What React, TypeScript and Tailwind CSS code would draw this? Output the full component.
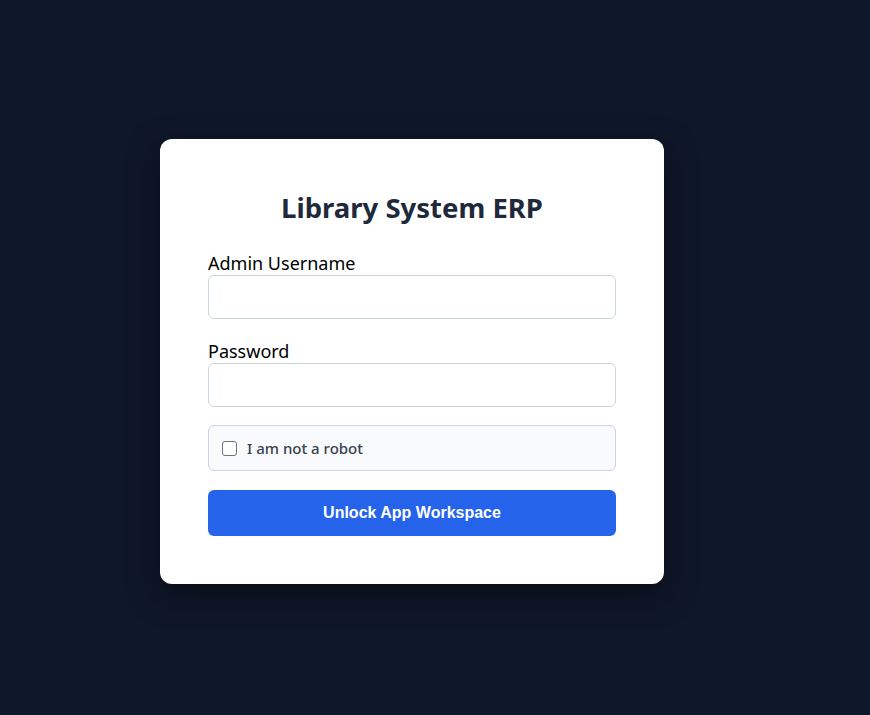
export default function App() {
  return (
    <div className="min-h-[715px] w-full bg-[#0f172a] flex justify-start pt-[139px] pl-[160px]">
      <div
        className="w-[504px] h-[445px] bg-white rounded-[12px] px-12 pt-12 shadow-[0_10px_30px_rgba(0,0,0,0.5)]"
        style={{ fontFamily: '"Noto Sans", "Open Sans", sans-serif' }}
      >
        <h2 className="text-center text-[27.5px] leading-[42px] font-bold text-[#1e293b] mb-[24px]">
          Library System ERP
        </h2>
        <label className="block text-[18px] leading-[20px] pb-[2px] text-black">Admin Username</label>
        <input
          type="text"
          className="block w-full h-[44px] border border-[#cbd5e1] rounded-[6px] px-3 outline-none"
        />
        <label className="block text-[18px] leading-[20px] pb-[2px] text-black mt-[22px]">Password</label>
        <input
          type="password"
          className="block w-full h-[44px] border border-[#cbd5e1] rounded-[6px] px-3 outline-none"
        />
        <div className="mt-[18px] h-[46px] bg-[#f8fafc] border border-[#cbd5e1] rounded-[6px] flex items-center px-[13px] gap-[10px]">
          <span className="w-[15px] h-[15px] border-[1.5px] border-[#6b7280] rounded-[3px] bg-white" />
          <span className="text-[15px] font-medium text-[#374151]">I am not a robot</span>
        </div>
        <button
          className="mt-[19px] w-full h-[46px] bg-[#2563eb] rounded-[6px] text-white font-bold text-[16px]"
          style={{ fontFamily: '"Liberation Sans", Arial, sans-serif' }}
        >
          Unlock App Workspace
        </button>
      </div>
    </div>
  );
}
